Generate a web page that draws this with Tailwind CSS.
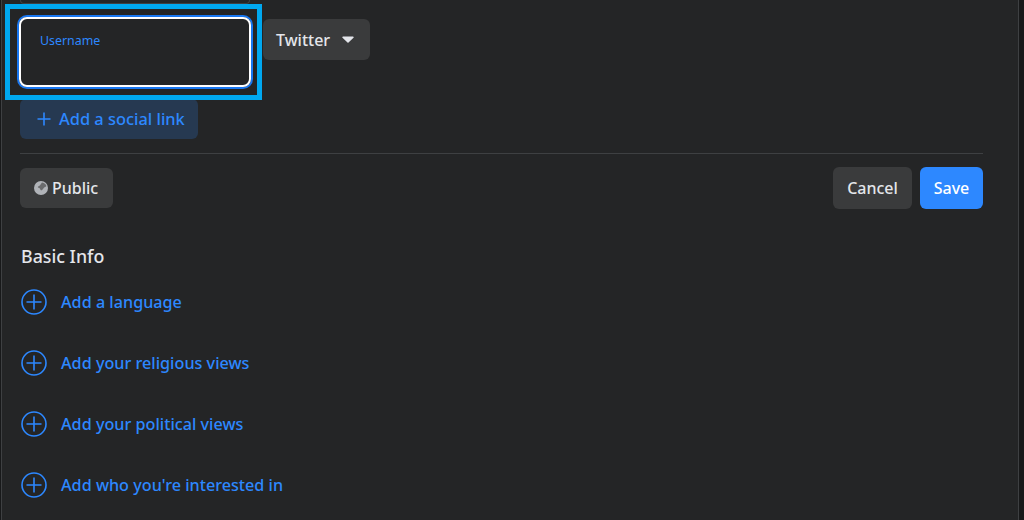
<!DOCTYPE html>
<html lang="en">
<head>
    <meta charset="UTF-8">
    <title>Edit profile - Contact and basic info</title>
    <script src="https://cdn.jsdelivr.net/npm/@tailwindcss/browser@4"></script>
</head>
<body class="bg-[#18191a] font-['Noto_Sans','Open_Sans',sans-serif] antialiased">
    <div class="relative h-[520px] w-[1024px] overflow-hidden">
        <!-- Card -->
        <main class="ml-px mr-[5px] h-[520px] border-x border-[#3e4042] bg-[#242526] pl-[18px] pr-[35px]">
            <!-- Bottom of the field above -->
            <div class="h-[4px] w-[230px] rounded-b-lg border border-t-0 border-[#3e4042]"></div>

            <!-- Social link -->
            <div class="mt-[13px] flex items-start">
                <div class="-ml-px flex h-[70px] w-[232px] rounded-lg border-2 border-white px-[19px] py-[13px] ring-2 ring-[#1877f2]">
                    <span class="text-[12.400px] leading-[18px] text-[#2d88ff]">Username</span>
                </div>
                <button class="ml-[12px] mt-[2px] flex h-[41px] w-[107px] items-center rounded-md bg-[#3a3b3c] pl-[13px] text-[16px] font-[550] leading-[38px] text-[#e4e6eb]">
                    Twitter
                    <svg class="ml-[12px]" width="12" height="7" viewBox="0 0 12 7"><path d="M1 0.5h10a.7.7 0 0 1 .5 1.2L6.5 6.4a.7.7 0 0 1-1 0L.5 1.7A.7.7 0 0 1 1 .5z" fill="#e4e6eb"/></svg>
                </button>
            </div>

            <button class="mt-[12px] flex h-[40px] w-[178px] items-center rounded-md bg-[#263951] pl-[17px] text-[16.400px] font-[550] text-[#2d88ff]">
                <svg class="mr-[8px]" width="14" height="14" viewBox="0 0 14 14"><path d="M7 .5v13M.5 7h13" stroke="#2d88ff" stroke-width="1.6"/></svg>
                Add a social link
            </button>

            <div class="mt-[14px] h-px bg-[#3e4042]"></div>

            <!-- Privacy and actions -->
            <div class="mt-[13px] flex items-center justify-between">
                <button class="flex h-[40px] w-[93px] items-center rounded-md bg-[#3a3b3c] pl-[14px] text-[16px] font-[550] text-[#e4e6eb]">
                    <svg class="mr-[4px]" width="14" height="14" viewBox="0 0 14 14">
                        <circle cx="7" cy="7" r="7" fill="#b0b3b8"/>
                        <path d="M8 1.500c2.400.3 4 1.600 4.400 3.600-.8 1.300-2 1-2.700 2-.6.9-1.300 2.300-2.500 2.300-.9 0-.9-1.600-1.600-2.100C4.900 6.900 3.900 7 3.900 6c0-.9 1.400-.9 2-1.500C6.700 3.700 7.100 2.600 8 1.500z" fill="#6a6b6d"/>
                    </svg>
                    Public
                </button>
                <div class="flex gap-[8px]">
                    <button class="h-[42px] w-[79px] rounded-md bg-[#3a3b3c] text-[16px] font-[550] text-[#e4e6eb]">Cancel</button>
                    <button class="h-[42px] w-[63px] rounded-md bg-[#2d88ff] text-[16px] font-[550] text-white">Save</button>
                </div>
            </div>

            <!-- Basic info -->
            <h2 class="ml-px mt-[35px] text-[17.800px] font-medium leading-[24px] text-[#e4e6eb]">Basic Info</h2>

            <ul class="ml-px mt-[21px] text-[16.200px] font-[550] text-[#2d88ff]">
                <li class="flex h-[61px] items-start gap-[14px]">
                    <svg width="26" height="26" viewBox="0 0 26 26" fill="none" stroke="#2d88ff" stroke-width="1.6"><circle cx="13" cy="13" r="12"/><path d="M13 5.500v15M5.500 13h15"/></svg>
                    <span class="leading-[26px]">Add a language</span>
                </li>
                <li class="flex h-[61px] items-start gap-[14px]">
                    <svg width="26" height="26" viewBox="0 0 26 26" fill="none" stroke="#2d88ff" stroke-width="1.6"><circle cx="13" cy="13" r="12"/><path d="M13 5.500v15M5.500 13h15"/></svg>
                    <span class="leading-[26px]">Add your religious views</span>
                </li>
                <li class="flex h-[61px] items-start gap-[14px]">
                    <svg width="26" height="26" viewBox="0 0 26 26" fill="none" stroke="#2d88ff" stroke-width="1.6"><circle cx="13" cy="13" r="12"/><path d="M13 5.500v15M5.500 13h15"/></svg>
                    <span class="leading-[26px]">Add your political views</span>
                </li>
                <li class="flex h-[61px] items-start gap-[14px]">
                    <svg width="26" height="26" viewBox="0 0 26 26" fill="none" stroke="#2d88ff" stroke-width="1.6"><circle cx="13" cy="13" r="12"/><path d="M13 5.500v15M5.500 13h15"/></svg>
                    <span class="leading-[26px]">Add who you're interested in</span>
                </li>
            </ul>
        </main>

        <!-- Highlight drawn over the field -->
        <div class="absolute left-[5px] top-[4px] h-[96px] w-[257px] border-[5px] border-[#00a8f0]"></div>
    </div>
</body>
</html>
